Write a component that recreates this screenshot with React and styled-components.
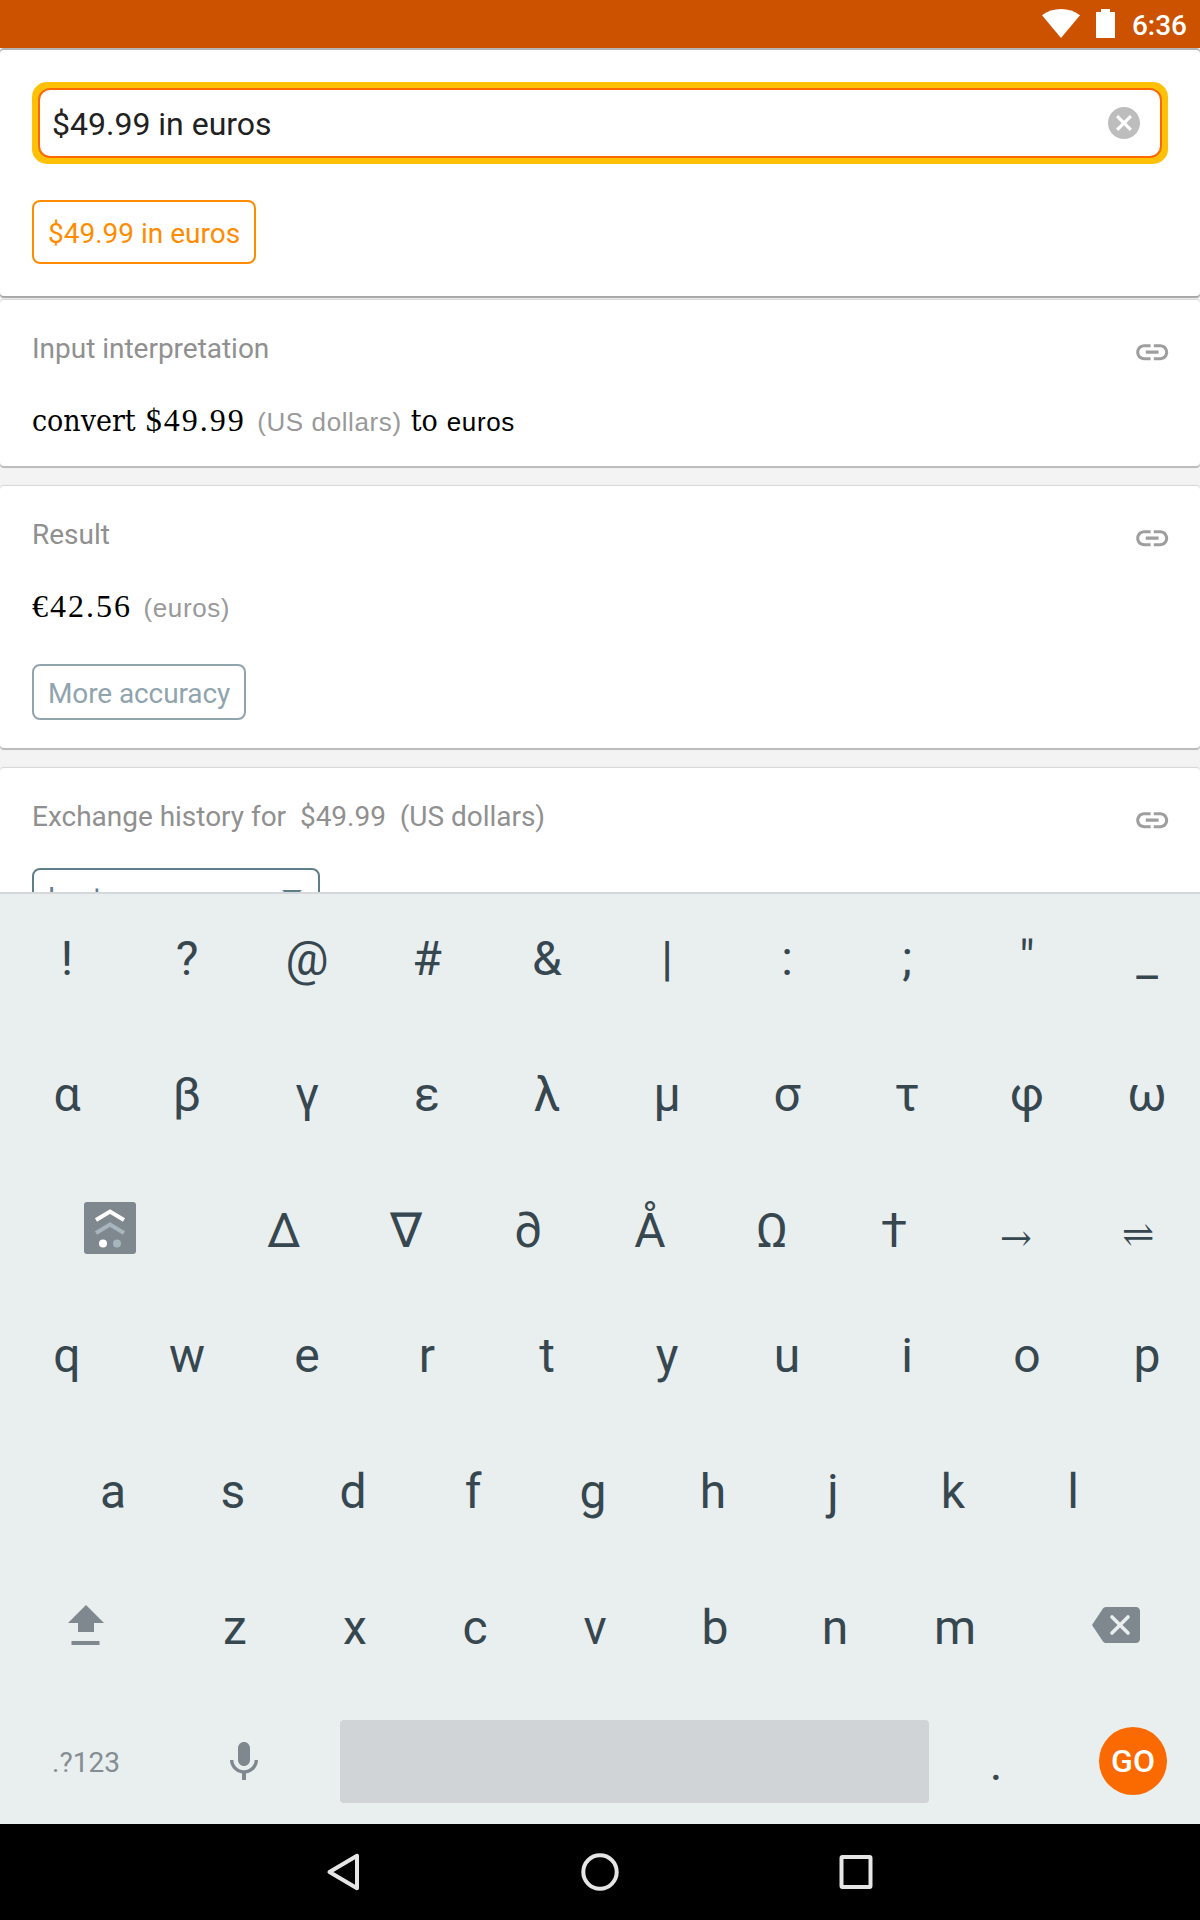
import styled, { createGlobalStyle } from "styled-components";

const symbols = ["!", "?", "@", "#", "&", "|", ":", ";", '"', "_"];
const greek = ["α", "β", "γ", "ε", "λ", "μ", "σ", "τ", "φ", "ω"];
const math = ["Δ", "∇", "∂", "Å", "Ω", "†"];
const topRow = ["q", "w", "e", "r", "t", "y", "u", "i", "o", "p"];
const homeRow = ["a", "s", "d", "f", "g", "h", "j", "k", "l"];
const bottomRow = ["z", "x", "c", "v", "b", "n", "m"];

const LinkIcon = () => (
  <svg width="38.4" height="38.4" viewBox="0 0 24 24" fill="#9e9e9e">
    <path d="M3.9 12c0-1.71 1.39-3.1 3.1-3.1h4V7H7c-2.76 0-5 2.24-5 5s2.24 5 5 5h4v-1.9H7c-1.71 0-3.1-1.39-3.1-3.1zM8 13h8v-2H8v2zm9-6h-4v1.9h4c1.71 0 3.1 1.39 3.1 3.1s-1.39 3.1-3.1 3.1h-4V17h4c2.76 0 5-2.24 5-5s-2.24-5-5-5z" />
  </svg>
);

const ModeIcon = () => (
  <svg width="52" height="52" viewBox="0 0 52 52" fill="none">
    <rect width="52" height="52" rx="3" fill="#80888f" />
    <path d="M12 18L26 9.5l14 8.5" stroke="#fff" strokeWidth="4" />
    <path d="M12 31L26 22.5l14 8.5" stroke="#a7b6be" strokeWidth="4" />
    <circle cx="19" cy="41.5" r="4" fill="#fff" />
    <circle cx="33" cy="41.5" r="4" fill="#a7b6be" />
  </svg>
);

const ShiftIcon = () => (
  <svg width="36" height="40" viewBox="0 0 36 40" fill="#80888f">
    <path d="M18 0l18 18H26v9H10v-9H0z" />
    <rect x="3.5" y="36" width="28" height="4" />
  </svg>
);

const BackspaceIcon = () => (
  <svg width="48" height="36" viewBox="0 0 48 36">
    <path
      d="M44 0H14c-1.4 0-2.4.7-3.2 1.8L0 18l10.8 16.2c.8 1 1.8 1.8 3.2 1.8h30c2.2 0 4-1.8 4-4V4c0-2.2-1.8-4-4-4z"
      fill="#80888f"
    />
    <path
      d="M20 10l16 16M36 10L20 26"
      stroke="#e9eeef"
      strokeWidth="3.6"
      strokeLinecap="round"
    />
  </svg>
);

const MicIcon = () => (
  <svg width="28" height="38" viewBox="5 2 14 19" fill="#80888f">
    <path d="M12 14c1.66 0 3-1.34 3-3V5c0-1.66-1.34-3-3-3S9 3.34 9 5v6c0 1.66 1.34 3 3 3zm5.3-3c0 3-2.54 5.1-5.3 5.1S6.7 14 6.7 11H5c0 3.41 2.72 6.23 6 6.72V21h2v-3.28c3.28-.48 6-3.3 6-6.72h-1.7z" />
  </svg>
);

const Title = ({ children }) => (
  <TitleRow>
    <TitleText>{children}</TitleText>
    <LinkIcon />
  </TitleRow>
);

const App = () => {
  return (
    <Screen>
      <GlobalStyle />
      <StatusBar>
        <svg width="38" height="29" viewBox="0 0 38 29" fill="#fff">
          <path d="M19 29L0 6.2C5.5 2 12 0 19 0s13.5 2 19 6.2z" />
        </svg>
        <svg width="19" height="29" viewBox="0 0 19 29" fill="#fff">
          <path d="M5 0h9v3h5v26H0V3h5z" />
        </svg>
        <Clock>6:36</Clock>
      </StatusBar>

      <Results>
        <QueryCard>
          <QueryBox>
            <QueryInner>
              <QueryText>$49.99 in euros</QueryText>
              <svg width="32" height="32" viewBox="2 2 20 20" fill="#bdbdbd">
                <path d="M12 2C6.47 2 2 6.47 2 12s4.47 10 10 10 10-4.47 10-10S17.53 2 12 2zm5 13.59L15.59 17 12 13.41 8.41 17 7 15.59 10.59 12 7 8.41 8.41 7 12 10.59 15.59 7 17 8.41 13.41 12 17 15.59z" />
              </svg>
            </QueryInner>
          </QueryBox>
          <Suggestion>$49.99 in euros</Suggestion>
        </QueryCard>

        <Card $height={166} $gap={20}>
          <Title>Input interpretation</Title>
          <Pod>
            <Serif $gap={10}>convert</Serif>
            <SerifNumber>$49.99</SerifNumber>
            <Unit $gap={9}>(US dollars)</Unit>
            <Serif $gap={9}>to</Serif>
            <UnitName>euros</UnitName>
          </Pod>
        </Card>

        <Card $height={262} $gap={20}>
          <Title>Result</Title>
          <Pod>
            <SerifNumber>€42.56</SerifNumber>
            <Unit>(euros)</Unit>
          </Pod>
          <MoreButton>More accuracy</MoreButton>
        </Card>

        <Card $height={330} $gap={0}>
          <Title>{"Exchange history for \u00a0$49.99 \u00a0(US dollars)"}</Title>
          <Select>
            <span>Last year</span>
            <svg width="20" height="10" viewBox="0 0 20 10" fill="#607d8b">
              <path d="M0 0h20L10 10z" />
            </svg>
          </Select>
        </Card>
      </Results>

      <Keyboard>
        <KeyGroup>
          <KeyRow $start={7}>
            {symbols.map((el) => (
              <Key key={el}>{el}</Key>
            ))}
          </KeyRow>
          <KeyRow $start={7}>
            {greek.map((el) => (
              <Key key={el}>{el}</Key>
            ))}
          </KeyRow>
          <KeyRow $start={0}>
            <IconKey $width={223} $right={3}>
              <ModeIcon />
            </IconKey>
            {math.map((el) => (
              <Key key={el} $width={122}>
                {el}
              </Key>
            ))}
            <ArrowKey $width={122} $drop={8}>
              →
            </ArrowKey>
            <ArrowKey $width={122} $drop={4}>
              ⇌
            </ArrowKey>
          </KeyRow>
        </KeyGroup>

        <KeyGroup>
          <KeyRow $start={7}>
            {topRow.map((el) => (
              <Key key={el}>{el}</Key>
            ))}
          </KeyRow>
          <KeyRow $start={53}>
            {homeRow.map((el) => (
              <Key key={el}>{el}</Key>
            ))}
          </KeyRow>
          <KeyRow $start={0}>
            <IconKey $width={175} $right={3}>
              <ShiftIcon />
            </IconKey>
            {bottomRow.map((el) => (
              <Key key={el}>{el}</Key>
            ))}
            <IconKey $width={202} $right={0}>
              <BackspaceIcon />
            </IconKey>
          </KeyRow>
          <KeyRow $start={0}>
            <ModeKey>.?123</ModeKey>
            <IconKey $width={168} $right={24}>
              <MicIcon />
            </IconKey>
            <SpaceBar />
            <Key $width={134}>.</Key>
            <IconKey $width={137} $right={0}>
              <GoButton>GO</GoButton>
            </IconKey>
          </KeyRow>
        </KeyGroup>
      </Keyboard>

      <NavBar>
        <svg width="38" height="38" viewBox="0 0 38 38">
          <path
            d="M4.5 19L32 2.8v32.4z"
            stroke="#e6e6e6"
            strokeWidth="4"
            strokeLinejoin="round"
          />
        </svg>
        <svg width="38" height="38" viewBox="0 0 38 38">
          <circle cx="19" cy="19" r="16.7" stroke="#e6e6e6" strokeWidth="4" />
        </svg>
        <svg width="38" height="38" viewBox="0 0 38 38">
          <rect
            x="4.5"
            y="4"
            width="29"
            height="30"
            rx="1"
            stroke="#e6e6e6"
            strokeWidth="4"
          />
        </svg>
      </NavBar>
    </Screen>
  );
};
export default App;

const GlobalStyle = createGlobalStyle`
  * {
    box-sizing: border-box;
  }
  body {
    margin: 0;
    font-family: Roboto, "Liberation Sans", sans-serif;
  }
  svg {
    display: block;
    flex: none;
  }
`;

const Screen = styled.div`
  width: 1200px;
  height: 1920px;
  display: flex;
  flex-direction: column;
  overflow: hidden;
  background: #f3f3f3;
`;

const StatusBar = styled.div`
  height: 48px;
  flex: none;
  display: flex;
  align-items: center;
  justify-content: flex-end;
  gap: 16.5px;
  padding: 0 13px 1px 0;
  background: #cc5200;
`;
const Clock = styled.div`
  color: #fff;
  font-size: 28px;
  font-weight: 500;
  line-height: 34px;
  padding-top: 4px;
`;

const Results = styled.div`
  height: 844px;
  flex: none;
  overflow: hidden;
  display: flex;
  flex-direction: column;
`;
const Card = styled.div`
  height: ${(props) => props.$height}px;
  margin-bottom: ${(props) => props.$gap}px;
  flex: none;
  padding: 30px 32px 0;
  background: #fff;
  border-radius: 4px;
  box-shadow: 0 -1px 1px #d6d6d6, 0 2px 1px #bababa;
`;
const QueryCard = styled(Card).attrs({ $height: 246, $gap: 4 })`
  margin-top: 2px;
  padding-top: 32px;
  box-shadow: 0 -2px 0 #b4b4b4, 0 2px 1px #a6a6a6;
`;

const QueryBox = styled.div`
  height: 82px;
  padding: 6px;
  background: #ffc107;
  border-radius: 15px;
`;
const QueryInner = styled.div`
  height: 70px;
  display: flex;
  align-items: center;
  justify-content: space-between;
  padding: 0 20px 0 12px;
  background: #fff;
  border: 2px solid #fb6a00;
  border-radius: 12px;
`;
const QueryText = styled.span`
  padding-top: 2px;
  color: #212121;
  font-size: 32px;
`;

const Outlined = styled.div`
  width: fit-content;
  padding: 0 14px;
  border: 2px solid;
  border-radius: 8px;
  font-size: 28px;
`;
const Suggestion = styled(Outlined)`
  margin-top: 36px;
  line-height: 63px;
  height: 64px;
  color: #ff8c00;
`;
const MoreButton = styled(Outlined)`
  width: 214px;
  margin-top: 35px;
  height: 56px;
  line-height: 55px;
  color: #90a4ae;
  letter-spacing: -0.1px;
  white-space: nowrap;
`;
const Select = styled(Outlined)`
  width: 288px;
  height: 64px;
  margin-top: 32px;
  padding: 0 16px 0 14px;
  display: flex;
  justify-content: space-between;
  line-height: 55px;
  color: #607d8b;

  svg {
    margin-top: 20px;
  }
`;

const TitleRow = styled.div`
  height: 38px;
  display: flex;
  justify-content: space-between;
  align-items: flex-start;
  margin-right: -3px;

  svg {
    margin-top: 3px;
  }
`;
const TitleText = styled.div`
  color: #909090;
  font-size: 28px;
  line-height: 37px;
  letter-spacing: -0.02px;
`;

const Pod = styled.div`
  height: 48px;
  margin-top: 27px;
  display: flex;
  align-items: baseline;
  line-height: 50px;
  white-space: nowrap;
  color: #000;
`;
const Serif = styled.span`
  margin-right: ${(props) => props.$gap}px;
  font-family: "DejaVu Serif Condensed", "DejaVu Serif", serif;
  font-size: 30px;
`;
const SerifNumber = styled.span`
  margin-right: 11.5px;
  font-family: "Liberation Serif", serif;
  font-size: 32px;
  letter-spacing: 2px;
`;
const Unit = styled.span`
  margin-right: ${(props) => props.$gap || 0}px;
  color: #999;
  font-family: "Liberation Sans", sans-serif;
  font-size: 26px;
  letter-spacing: 0.6px;
`;
const UnitName = styled(Unit)`
  color: #000;
`;

const Keyboard = styled.div`
  height: 932px;
  flex: none;
  display: flex;
  flex-direction: column;
  gap: 24px;
  padding-top: 14px;
  overflow: hidden;
  background: #e9eeef;
  border-top: 2px solid #d4d8da;
`;
const KeyGroup = styled.div`
  display: flex;
  flex-direction: column;
  gap: 35px;
`;
const KeyRow = styled.div`
  height: 101px;
  display: flex;
  padding-left: ${(props) => props.$start}px;
`;
const Key = styled.div`
  flex: none;
  width: ${(props) => props.$width || 120}px;
  text-align: center;
  color: #37474f;
  font-size: 48px;
  line-height: 101px;
`;
const ArrowKey = styled(Key)`
  padding-top: ${(props) => props.$drop}px;
  font-family: "DejaVu Math TeX Gyre", "Noto Sans CJK JP", sans-serif;
  font-size: 34px;
`;
const IconKey = styled.div`
  flex: none;
  width: ${(props) => props.$width}px;
  display: flex;
  align-items: center;
  justify-content: center;
  padding: 0 ${(props) => props.$right}px 5px 0;
`;
const ModeKey = styled(Key).attrs({ $width: 172 })`
  color: #848d92;
  font-size: 28px;
  line-height: 99px;
`;
const SpaceBar = styled.div`
  flex: none;
  width: 589px;
  height: 83px;
  margin-top: 7px;
  border-radius: 4px;
  background: #d0d4d6;
`;
const GoButton = styled.div`
  width: 68px;
  height: 68px;
  margin-left: 3px;
  border-radius: 50%;
  background: #fb6a00;
  color: #fff;
  font-size: 32px;
  font-weight: 500;
  line-height: 69px;
  text-align: center;
`;

const NavBar = styled.div`
  height: 96px;
  flex: none;
  display: flex;
  align-items: center;
  justify-content: center;
  gap: 218px;
  background: #000;
`;
